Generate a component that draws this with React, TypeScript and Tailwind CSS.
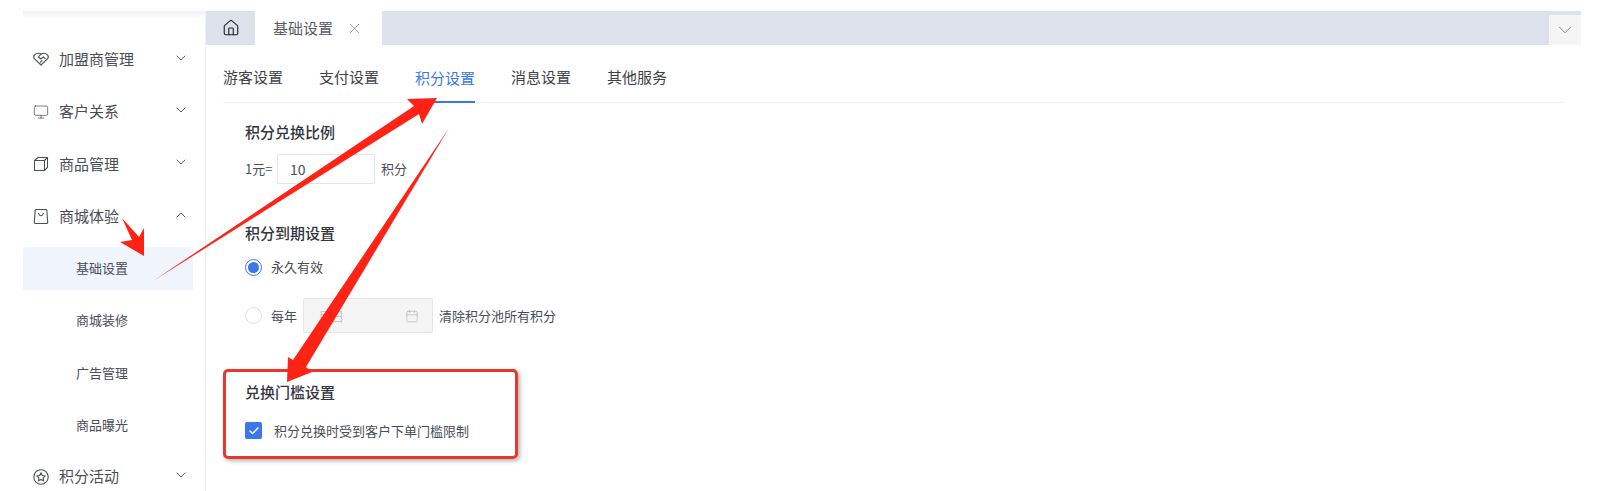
import { ChevronDown, ChevronUp, Monitor, Home, X, Calendar, Check } from "lucide-react";

const font = { fontFamily: '"Noto Sans CJK SC", "Liberation Sans", sans-serif' };

function Handshake() {
  return (
    <svg width="16" height="16" viewBox="0 0 16 16" fill="none" stroke="#4b4f57" strokeWidth="1.1" strokeLinejoin="round">
      <path d="M8 3.200C9.500 1.800 12.500 1.800 14.200 3.600c1.300 1.400 1.300 3.100.2 4.200L8 14 1.600 7.800C.5 6.700.5 5 1.800 3.600 3.500 1.800 6.500 1.800 8 3.200z" />
      <path d="M8 3.200L5.400 6l2.400 2 2.500-2.200 2.200 2.400M7 11.500l2.300-2.100" />
    </svg>
  );
}

function Cube() {
  return (
    <svg width="16" height="16" viewBox="0 0 16 16" fill="none" stroke="#4b4f57" strokeWidth="1.1" strokeLinejoin="round">
      <path d="M1.500 4.500L5 1.500h9.500v9.800L11.500 14.500h-10z" />
      <path d="M1.500 4.500h10v10M11.500 4.500l3-3" />
    </svg>
  );
}

function Bag() {
  return (
    <svg width="16" height="17" viewBox="0 0 16 17" fill="none" stroke="#4b4f57" strokeWidth="1.1">
      <path d="M3.200 1.500h9.600a1 1 0 0 1 1 .9l.9 11.800a1.200 1.200 0 0 1-1.200 1.300H2.500a1.200 1.200 0 0 1-1.200-1.300l.9-11.800a1 1 0 0 1 1-.9z" />
      <path d="M5.500 5c.4 1.800 1.400 2.700 2.500 2.700S10.100 6.800 10.500 5" />
    </svg>
  );
}

function Medal() {
  return (
    <svg width="16" height="16" viewBox="0 0 16 16" fill="none" stroke="#4b4f57" strokeWidth="1.1" strokeLinejoin="round">
      <circle cx="8" cy="8" r="7.200" />
      <path d="M8 3.800l1.300 2.700 2.900.4-2.100 2 .5 2.900L8 10.400l-2.600 1.400.5-2.900-2.100-2 2.900-.4z" />
    </svg>
  );
}

function MenuGroup({ icon, label, open }: { icon: React.ReactNode; label: string; open?: boolean }) {
  return (
    <div className="h-[52.4px] flex items-center pl-[10px] text-[15px] text-[#4a4d55]">
      <span className="w-[16px] flex justify-center">{icon}</span>
      <span className="ml-[10px] w-[114px]">{label}</span>
      {open ? (
        <ChevronUp size={16} strokeWidth={1.4} className="-mt-[3px]" />
      ) : (
        <ChevronDown size={16} strokeWidth={1.4} className="-mt-[3px]" />
      )}
    </div>
  );
}

function SubItem({ label, active }: { label: string; active?: boolean }) {
  return (
    <div className={`h-[43px] pb-[2px] flex items-center w-[170px] pl-[53px] text-[13px] text-[#4a4d55] ${active ? "bg-[#f0f4fd]" : ""}`}>
      {label}
    </div>
  );
}

function SectionTitle({ children }: { children: React.ReactNode }) {
  return <div className="text-[15px] leading-[20px] font-medium text-[#33363d]">{children}</div>;
}

function Annotations() {
  return (
    <svg className="absolute left-0 top-0 pointer-events-none" width="1599" height="491" viewBox="0 0 1599 491">
      <g fill="#ff2316">
        <polygon points="153,281 414,106 407,99 437,98 422,124 419,114" />
        <polygon points="449,128 306,367 312,372 287,382 288,357 293,360" />
        <polygon points="122,218 139,237 144,228 144,256 120,242 132,240" />
      </g>
    </svg>
  );
}

export default function App() {
  return (
    <div className="relative w-[1599px] h-[491px] overflow-hidden bg-white" style={font}>
      <div className="h-full pt-[11px] pl-[23px] pr-[18px] flex">
        <aside className="w-[183px] shrink-0 border-r border-[#eef0f3]">
          <div className="h-[8px] bg-gradient-to-b from-[#f0f1f4] to-white" />
          <div className="pt-[14px]">
            <MenuGroup icon={<Handshake />} label="加盟商管理" />
            <MenuGroup icon={<Monitor size={16} strokeWidth={1.1} />} label="客户关系" />
            <MenuGroup icon={<Cube />} label="商品管理" />
            <MenuGroup icon={<Bag />} label="商城体验" open />
            <div className="flex flex-col gap-[9.4px] mt-[4.7px] mb-[3px]">
              <SubItem label="基础设置" active />
              <SubItem label="商城装修" />
              <SubItem label="广告管理" />
              <SubItem label="商品曝光" />
            </div>
            <MenuGroup icon={<Medal />} label="积分活动" />
          </div>
        </aside>
        <main className="flex-1 min-w-0">
          <div className="h-[34px] flex bg-[#dde1ec]">
            <div className="w-[49px] flex items-center justify-center bg-[#dde1ec]">
              <Home size={18} strokeWidth={1.5} className="text-[#23252b]" />
            </div>
            <div className="w-[127px] h-[34px] bg-white flex items-center pl-[18px] text-[15px] text-[#5a5d64]">
              基础设置
              <X size={17} strokeWidth={1} className="ml-[13px] text-[#777a80]" />
            </div>
            <div className="flex-1" />
            <div className="w-[32px] mt-[4px] h-[30px] bg-[#f5f5f5] flex items-center justify-center">
              <ChevronDown size={22} strokeWidth={1} className="text-[#777a80]" />
            </div>
          </div>
          <div className="ml-[17px] mr-[16px] h-[58px] flex items-end gap-[36px] border-b border-[#f2f3f5] text-[15px] text-[#3f4249]">
            <div className="h-[58px] pt-[21px] leading-[24px]">游客设置</div>
            <div className="h-[58px] pt-[21px] leading-[24px]">支付设置</div>
            <div className="h-[58px] pt-[21px] leading-[24px] text-[#3b78e7] border-b-2 border-[#3b78e7] -mb-px">积分设置</div>
            <div className="h-[58px] pt-[21px] leading-[24px]">消息设置</div>
            <div className="h-[58px] pt-[21px] leading-[24px]">其他服务</div>
          </div>
          <div className="pl-[39px] pt-[19px]">
            <SectionTitle>积分兑换比例</SectionTitle>
            <div className="flex items-center mt-[12px] text-[13px] text-[#4a4d55]">
              <span className="w-[32px]">1元=</span>
              <div className="w-[98px] h-[30px] border border-[#e3e4e7] rounded-[2px] flex items-center pl-[12px] text-[14px]">10</div>
              <span className="ml-[6px]">积分</span>
            </div>
            <div className="mt-[39px]">
              <SectionTitle>积分到期设置</SectionTitle>
            </div>
            <div className="flex items-center mt-[14px] h-[20px] text-[13px] text-[#4a4d55]">
              <span className="w-[17px] h-[17px] rounded-full border border-[#3b78e7] flex items-center justify-center">
                <span className="w-[11px] h-[11px] rounded-full bg-[#3b78e7]" />
              </span>
              <span className="ml-[9px]">永久有效</span>
            </div>
            <div className="flex items-center mt-[21px] h-[35px] text-[13px] text-[#4a4d55]">
              <span className="w-[17px] h-[17px] rounded-full border border-[#dfe0e3]" />
              <span className="ml-[9px]">每年</span>
              <div className="ml-[6px] w-[130px] h-[35px] bg-[#f5f5f5] border border-[#e6e6e8] rounded-[2px] flex items-center justify-between pl-[14px] pr-[13px] text-[#c4c5c9]">
                月日
                <Calendar size={14} strokeWidth={1} className="text-[#a9abb0]" />
              </div>
              <span className="ml-[6px]">清除积分池所有积分</span>
            </div>
            <div className="-ml-[22px] mt-[36px] w-[295px] h-[90px] border-[3px] border-[#e5392d] rounded-[5px] shadow-[2px_2px_4px_rgba(0,0,0,0.3)] pl-[19px] pt-[10px]">
              <SectionTitle>兑换门槛设置</SectionTitle>
              <div className="flex items-center mt-[19px] text-[13px] text-[#4a4d55]">
                <span className="w-[17px] h-[17px] rounded-[2px] bg-[#3b78e7] flex items-center justify-center">
                  <Check size={12} strokeWidth={3} className="text-white" />
                </span>
                <span className="ml-[12px]">积分兑换时受到客户下单门槛限制</span>
              </div>
            </div>
          </div>
        </main>
      </div>
      <Annotations />
    </div>
  );
}
